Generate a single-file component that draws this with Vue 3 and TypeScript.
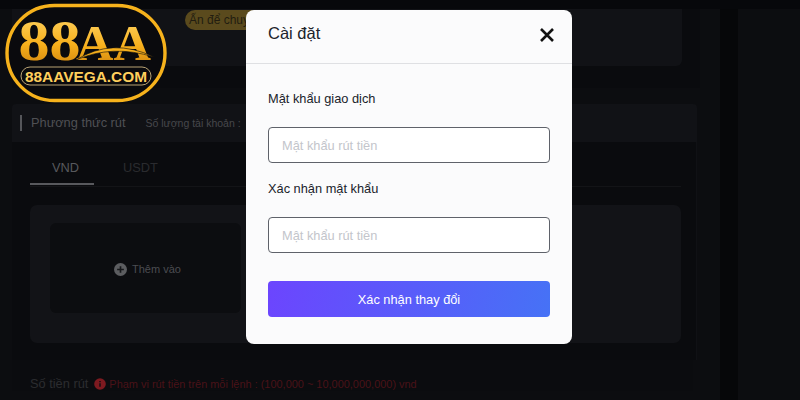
<template>
  <div class="page">
    <div class="topbar"></div>
    <div class="columns">
      <main class="main">
        <section class="notice-panel">
          <div class="notice-card">
            <span class="pill">Ấn để chuyển</span>
          </div>
        </section>

        <section class="method-bar">
          <span class="method-title">Phương thức rút</span>
          <span class="method-count">Số lượng tài khoản :</span>
        </section>

        <section class="method-body">
          <div class="tabs">
            <span
              v-for="tab in tabs"
              :key="tab.label"
              class="tab"
              :class="{ active: tab.active }"
            >{{ tab.label }}</span>
          </div>
          <div class="account-card">
            <div class="add-box">
              <svg class="add-icon" viewBox="0 0 14 14" width="13" height="13">
                <circle cx="7" cy="7" r="7" fill="#5c5d60" />
                <path d="M7 3.4v7.2M3.4 7h7.2" stroke="#17181b" stroke-width="1.8" />
              </svg>
              <span>Thêm vào</span>
            </div>
          </div>
        </section>

        <section class="amount-row">
          <span class="amount-title">Số tiền rút</span>
          <svg viewBox="0 0 12 12" width="12" height="12">
            <circle cx="6" cy="6" r="5.8" fill="#7d1a20" />
            <path d="M6 5.2v3.6M6 3v1.2" stroke="#0d0e11" stroke-width="1.4" />
          </svg>
          <span class="amount-hint">Phạm vi rút tiền trên mỗi lệnh : (100,000 ~ 10,000,000,000) vnd</span>
        </section>
      </main>
      <div class="gutter"></div>
      <aside class="dark-col"></aside>
      <div class="rest"></div>
    </div>

    <svg class="logo" viewBox="0 0 170 106" width="170" height="106">
      <defs>
        <linearGradient id="gold" x1="0" y1="0" x2="0" y2="1">
          <stop offset="0" stop-color="#ffd76a" />
          <stop offset="0.55" stop-color="#f7b01c" />
          <stop offset="1" stop-color="#c97d0c" />
        </linearGradient>
      </defs>
      <rect x="7" y="5.5" width="158" height="95" rx="47.5" fill="#0a0a0d" stroke="#f6b21c" stroke-width="3.4" />
      <text x="18.5" y="60" class="logo-big" font-size="56" fill="url(#gold)" textLength="62" lengthAdjust="spacingAndGlyphs">88</text>
      <text x="76" y="60" class="logo-big" font-size="50" fill="url(#gold)" textLength="75" lengthAdjust="spacingAndGlyphs">AA</text>
      <path d="M76 60Q112 37 154 57Q112 44 76 60Z" fill="#f7b01c" stroke="#0a0a0d" stroke-width="0.6" />
      <rect x="21" y="67" width="130" height="18" rx="9" fill="none" stroke="#b9a375" stroke-width="1" />
      <text x="25" y="81.5" class="logo-small" font-size="14" fill="#ffcf5c" textLength="122" lengthAdjust="spacingAndGlyphs">88AAVEGA.COM</text>
    </svg>

    <div class="modal">
      <header class="modal-header">
        <h2>Cài đặt</h2>
        <svg class="close" viewBox="1 1 14 14" width="14" height="14">
          <path d="M2 2l12 12M14 2L2 14" stroke="#111" stroke-width="2.6" />
        </svg>
      </header>
      <form class="modal-body" @submit.prevent>
        <template v-for="field in fields" :key="field">
          <label class="field-label">{{ field }}</label>
          <input class="field-input" type="password" placeholder="Mật khẩu rút tiền" />
        </template>
        <button class="submit" type="submit">Xác nhận thay đổi</button>
      </form>
    </div>
  </div>
</template>

<script setup lang="ts">
interface Tab {
  label: string;
  active: boolean;
}

const tabs: Tab[] = [
  { label: 'VND', active: true },
  { label: 'USDT', active: false },
];

const fields: string[] = ['Mật khẩu giao dịch', 'Xác nhận mật khẩu'];
</script>

<style scoped>
.page {
  position: relative;
  width: 800px;
  height: 400px;
  overflow: hidden;
  background: #0c0d10;
  font-family: "Liberation Sans", Arial, sans-serif;
}

.topbar {
  height: 9px;
  background: #07080b;
}

.columns {
  display: flex;
  height: 391px;
}

.main {
  width: 697px;
  flex: none;
  padding-left: 12px;
  box-sizing: border-box;
}

.notice-panel {
  height: 79px;
  margin-bottom: 16px;
  margin-right: -3px;
  background: #0a0b0e;
}

.notice-card {
  width: 670px;
  height: 57px;
  background: #111216;
  border-radius: 0 0 6px 6px;
  box-sizing: border-box;
  padding: 1px 0 0 173px;
}

.pill {
  display: inline-block;
  height: 20px;
  line-height: 20px;
  padding: 0 8px 0 4px;
  background: #5a4a1d;
  border-radius: 10px;
  color: #221d10;
  font-size: 12px;
  white-space: nowrap;
}

.method-bar {
  display: flex;
  align-items: center;
  height: 38px;
  background: #111216;
  border-radius: 4px 4px 0 0;
  padding-left: 8px;
}

.method-title {
  border-left: 2px solid #55565a;
  padding-left: 9px;
  color: #4f5054;
  font-size: 12.8px;
  line-height: 16px;
  margin-right: 20px;
}

.method-count {
  color: #47484c;
  font-size: 10.5px;
}

.method-body {
  height: 218px;
  box-sizing: border-box;
  padding: 0 15px 0 18px;
  background: #0a0b0e;
  border-right: 1px solid #101115;
}

.tabs {
  display: flex;
  height: 45px;
  box-sizing: border-box;
  border-bottom: 1px solid #131417;
}

.tab {
  height: 43px;
  box-sizing: border-box;
  padding: 0 15px 0 22px;
  line-height: 52px;
  font-size: 12.8px;
  color: #2a2b2f;
}

.tab + .tab {
  margin-left: 7px;
}

.tab.active {
  color: #58595d;
  border-bottom: 2px solid #58595d;
}

.account-card {
  margin-top: 18px;
  height: 138px;
  background: #121317;
  border-radius: 7px;
  padding: 18px 20px;
  box-sizing: border-box;
}

.add-box {
  display: flex;
  align-items: center;
  justify-content: center;
  gap: 5px;
  width: 191px;
  height: 90px;
  padding: 2px 0 0 4px;
  box-sizing: border-box;
  background: #0c0d10;
  border-radius: 6px;
  color: #4b4c50;
  font-size: 11px;
}

.amount-row {
  display: flex;
  align-items: center;
  gap: 3px;
  width: 681px;
  height: 31px;
  box-sizing: border-box;
  padding: 16px 0 0 18px;
  background: #0b0c0f;
  line-height: 16px;
}

.amount-title {
  color: #2b2c30;
  font-size: 12.8px;
  margin-right: 3px;
}

.amount-hint {
  color: #4a1218;
  font-size: 10.95px;
}

.gutter {
  width: 23px;
  flex: none;
}

.dark-col {
  width: 18px;
  flex: none;
  background: #060709;
}

.rest {
  flex: 1;
}

.logo {
  position: absolute;
  left: 0;
  top: 0;
}

.logo-big {
  font-family: "Liberation Serif", serif;
  font-weight: 700;
}

.logo-small {
  font-family: "Liberation Sans", sans-serif;
  font-weight: 700;
}

.modal {
  position: absolute;
  left: 246px;
  top: 10px;
  width: 326px;
  height: 334px;
  background: #fbfbfc;
  border-radius: 8px;
}

.modal-header {
  display: flex;
  align-items: center;
  justify-content: space-between;
  height: 53px;
  padding: 0 18px 0 22px;
  border-bottom: 1px solid #dfe0e3;
}

.modal-header h2 {
  margin: 0 0 6px;
  font-size: 16.5px;
  font-weight: 400;
  color: #20232b;
}

.close {
  margin-bottom: 3px;
}

.modal-body {
  display: flex;
  flex-direction: column;
  padding: 27px 22px 0;
}

.field-label {
  height: 16px;
  line-height: 16px;
  font-size: 12.8px;
  color: #20232b;
}

.field-input {
  height: 36px;
  margin: 20px 0 18px;
  padding: 0 13px;
  box-sizing: border-box;
  border: 1px solid #5f626a;
  border-radius: 4px;
  background: #fff;
  font-family: inherit;
  font-size: 12.8px;
  outline: none;
}

.field-input::placeholder {
  color: #c3c5cb;
}

.submit {
  height: 36px;
  margin-top: 10px;
  border: none;
  border-radius: 4px;
  background: linear-gradient(100deg, #6c45fe, #4672f6);
  color: #fff;
  font-family: inherit;
  font-size: 12.8px;
}
</style>
